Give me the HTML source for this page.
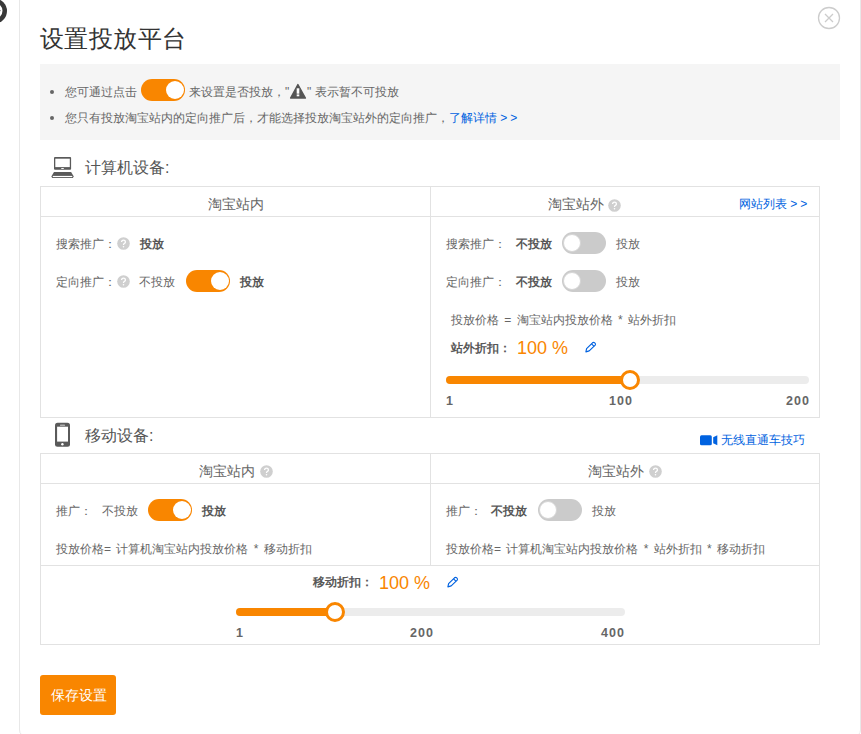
<!DOCTYPE html>
<html><head><meta charset="utf-8">
<style>
html,body{margin:0;padding:0;width:861px;height:734px;overflow:hidden;background:#fff;}
body{position:relative;font-family:"Liberation Sans",sans-serif;color:#666;}
.a{position:absolute;white-space:nowrap;}
.dlg{position:absolute;left:19px;top:-20px;width:840px;height:755px;border:1px solid #e8e8e8;border-radius:0 0 7px 7px;background:#fff;}
.title{font-size:24px;line-height:24px;color:#333;letter-spacing:0.4px;}
.info{left:40px;top:64px;width:800px;height:76px;background:#f5f5f5;}
.dot{width:4px;height:4px;border-radius:50%;background:#666;}
.t{font-size:12px;line-height:12px;color:#666;}
.h{font-size:14px;line-height:14px;color:#666;}
.tog{width:44px;height:22px;border-radius:11px;background:#f98600;box-sizing:border-box;}
.tog i{position:absolute;top:1.7px;right:0.9px;width:18.6px;height:18.6px;border-radius:50%;background:#fff;}
.tog.off{background:#cbcbcb;}
.tog.off i{left:0.7px;top:1.7px;right:auto;width:18.6px;height:18.6px;box-sizing:border-box;border:1px solid #d6d6d6;}
.tbl{border:1px solid #e2e2e2;box-sizing:border-box;}
.hl{height:1px;background:#e2e2e2;}
.vl{width:1px;background:#e2e2e2;}
.sec{font-size:16px;line-height:16px;color:#555;}
.blue{color:#0062e0;}
.bold{font-weight:bold;color:#585858;}
.org{color:#f98600;font-size:18px;line-height:18px;}
.q{width:13px;height:13px;}
.num{font-family:"Liberation Sans",sans-serif;font-size:12.5px;line-height:12px;font-weight:bold;color:#666;letter-spacing:1px;}
.track{height:8px;border-radius:4px;background:#ececec;}
.fill{height:8px;border-radius:4px 0 0 4px;background:#f98600;}
.knob{width:14px;height:14px;border:3.5px solid #f98600;border-radius:50%;background:#fff;}
.btn{left:40px;top:675px;width:76px;height:40px;border-radius:3px;background:#f98600;}
</style></head><body>
<div class="dlg"></div>
<svg class="a" style="left:0;top:0" width="20" height="30"><circle cx="-5.4" cy="11" r="12.4" fill="#383838"/><circle cx="-5.4" cy="10.8" r="7.9" fill="#fff"/><rect x="-2" y="10" width="2.6" height="1.2" fill="#777"/></svg>
<svg class="a" style="left:816px;top:5px" width="26" height="26"><circle cx="13" cy="13" r="10.5" fill="none" stroke="#ccc" stroke-width="1.3"/><path d="M9 9L17 17M17 9L9 17" stroke="#ccc" stroke-width="1.3"/></svg>

<div class="a title" id="title" style="left:40px;top:27px">设置投放平台</div>
<div class="a info"></div>
<div class="a dot" style="left:50px;top:90px"></div>
<div class="a t" id="b1" style="left:65px;top:86px">您可通过点击</div>
<div class="a tog" style="left:141px;top:79px"><i></i></div>
<div class="a t" id="b1b" style="left:189px;top:86px">来设置是否投放，"</div>
<svg class="a" style="left:288px;top:82px" width="20" height="18"><path d="M9.9 2.6L17.4 16.1H2.6Z" fill="#555" stroke="#555" stroke-width="1.4" stroke-linejoin="round"/><rect x="8.7" y="6.3" width="2.6" height="5.4" fill="#fff"/><rect x="8.7" y="12.4" width="2.6" height="1.9" fill="#fff"/></svg>
<div class="a t" id="b1c" style="left:307px;top:86px">" 表示暂不可投放</div>
<div class="a dot" style="left:50px;top:116px"></div>
<div class="a t" id="b2" style="left:65px;top:112px">您只有投放淘宝站内的定向推广后，才能选择投放淘宝站外的定向推广，<span class="blue">了解详情 <span style="letter-spacing:3px">&gt;</span>&gt;</span></div>

<!-- computer section -->
<svg class="a" style="left:46px;top:152px" width="34" height="30"><rect x="8" y="5.1" width="17.1" height="12.7" rx="1" fill="#5a5a5a"/><rect x="9.3" y="6.7" width="14.5" height="8.4" fill="#fff"/><ellipse cx="16.55" cy="16.5" rx="1.6" ry="0.6" fill="#fff"/><path d="M8 20H25.1L27.8 24.4L26.8 25.9H6.3L5.3 24.4Z" fill="#5a5a5a"/><rect x="6.8" y="23.9" width="19.5" height="1.2" fill="#fff"/></svg>
<div class="a sec" id="s1" style="left:85px;top:160px">计算机设备:</div>

<div class="a tbl" style="left:40px;top:186px;width:780px;height:232px"></div>
<div class="a hl" style="left:40px;top:216px;width:780px"></div>
<div class="a vl" style="left:430px;top:186px;height:232px"></div>

<div class="a h" id="h1" style="left:208px;top:197px">淘宝站内</div>
<div class="a h" id="h2" style="left:548px;top:197px">淘宝站外</div>
<svg class="a q" style="left:608px;top:199px" viewBox="0 0 13 13"><circle cx="6.5" cy="6.5" r="6.3" fill="#cfcfcf"/><path d="M4.6 5.1Q4.6 3.2 6.5 3.2Q8.4 3.2 8.4 4.9Q8.4 5.9 7.3 6.5Q6.5 7 6.5 7.9" fill="none" stroke="#fff" stroke-width="1.3"/><circle cx="6.5" cy="9.8" r="0.8" fill="#fff"/></svg>
<div class="a t blue" id="lnk1" style="left:739px;top:198px">网站列表 <span style="letter-spacing:3px">&gt;</span>&gt;</div>

<div class="a t" style="left:56px;top:238px">搜索推广：</div>
<svg class="a q" style="left:116.5px;top:237px" viewBox="0 0 13 13"><circle cx="6.5" cy="6.5" r="6.3" fill="#cfcfcf"/><path d="M4.6 5.1Q4.6 3.2 6.5 3.2Q8.4 3.2 8.4 4.9Q8.4 5.9 7.3 6.5Q6.5 7 6.5 7.9" fill="none" stroke="#fff" stroke-width="1.3"/><circle cx="6.5" cy="9.8" r="0.8" fill="#fff"/></svg>
<div class="a t bold" style="left:140px;top:238px">投放</div>
<div class="a t" style="left:56px;top:276px">定向推广：</div>
<svg class="a q" style="left:116.5px;top:275px" viewBox="0 0 13 13"><circle cx="6.5" cy="6.5" r="6.3" fill="#cfcfcf"/><path d="M4.6 5.1Q4.6 3.2 6.5 3.2Q8.4 3.2 8.4 4.9Q8.4 5.9 7.3 6.5Q6.5 7 6.5 7.9" fill="none" stroke="#fff" stroke-width="1.3"/><circle cx="6.5" cy="9.8" r="0.8" fill="#fff"/></svg>
<div class="a t" style="left:139px;top:276px">不投放</div>
<div class="a tog" style="left:186px;top:270px"><i></i></div>
<div class="a t bold" style="left:240px;top:276px">投放</div>

<div class="a t" style="left:446px;top:238px">搜索推广：</div>
<div class="a t bold" style="left:516px;top:238px">不投放</div>
<div class="a tog off" style="left:562px;top:232px"><i></i></div>
<div class="a t" style="left:616px;top:238px">投放</div>
<div class="a t" style="left:446px;top:276px">定向推广：</div>
<div class="a t bold" style="left:516px;top:276px">不投放</div>
<div class="a tog off" style="left:562px;top:270px"><i></i></div>
<div class="a t" style="left:616px;top:276px">投放</div>

<div class="a t" id="f1" style="left:451px;top:314px;word-spacing:2px">投放价格 = 淘宝站内投放价格 * 站外折扣</div>
<div class="a t bold" style="left:451px;top:342px">站外折扣：</div>
<div class="a org" id="p1" style="left:517px;top:339px">100 %</div>
<svg class="a" style="left:578px;top:336px" width="24" height="22"><path d="M7.9 15.9L8.6 12.7L14.5 6.8Q15.6 5.9 16.8 6.9Q18 8.1 17.2 9.1L11.2 14.9Z" fill="none" stroke="#0062e0" stroke-width="1.15" stroke-linejoin="round"/><path d="M13.5 7.8L15.9 10.2" stroke="#0062e0" stroke-width="1.2"/></svg>

<div class="a track" style="left:446px;top:376px;width:363px"></div>
<div class="a fill" style="left:446px;top:376px;width:184px"></div>
<div class="a knob" style="left:620px;top:369.5px"></div>
<div class="a num" id="n1" style="left:446px;top:395px">1</div>
<div class="a num" id="n2" style="left:609px;top:395px">100</div>
<div class="a num" id="n3" style="left:786px;top:395px">200</div>

<!-- mobile section -->
<svg class="a" style="left:52px;top:420px" width="22" height="30"><rect x="3" y="2.8" width="15" height="24" rx="2.5" fill="#5a5a5a"/><rect x="5.1" y="6.7" width="10.9" height="14.9" fill="#fff"/><rect x="8" y="4.7" width="5" height="0.9" rx="0.4" fill="#fff"/><circle cx="10.4" cy="24.3" r="1.2" fill="#fff"/></svg>
<div class="a sec" id="s2" style="left:85px;top:428px">移动设备:</div>
<svg class="a" style="left:699px;top:434px" width="20" height="13"><rect x="1" y="1.2" width="11.8" height="10.1" rx="1.5" fill="#0062e0"/><path d="M14.2 3.3L18.3 1.2V11.3L14.2 9.2Z" fill="#0062e0"/></svg>
<div class="a t blue" id="lnk2" style="left:721px;top:434px">无线直通车技巧</div>

<div class="a tbl" style="left:40px;top:453px;width:780px;height:192px"></div>
<div class="a hl" style="left:40px;top:483px;width:780px"></div>
<div class="a hl" style="left:40px;top:565px;width:780px"></div>
<div class="a vl" style="left:430px;top:453px;height:112px"></div>

<div class="a h" id="h3" style="left:199px;top:464px">淘宝站内</div>
<svg class="a q" style="left:259.5px;top:465px" viewBox="0 0 13 13"><circle cx="6.5" cy="6.5" r="6.3" fill="#cfcfcf"/><path d="M4.6 5.1Q4.6 3.2 6.5 3.2Q8.4 3.2 8.4 4.9Q8.4 5.9 7.3 6.5Q6.5 7 6.5 7.9" fill="none" stroke="#fff" stroke-width="1.3"/><circle cx="6.5" cy="9.8" r="0.8" fill="#fff"/></svg>
<div class="a h" id="h4" style="left:588px;top:464px">淘宝站外</div>
<svg class="a q" style="left:648.5px;top:465px" viewBox="0 0 13 13"><circle cx="6.5" cy="6.5" r="6.3" fill="#cfcfcf"/><path d="M4.6 5.1Q4.6 3.2 6.5 3.2Q8.4 3.2 8.4 4.9Q8.4 5.9 7.3 6.5Q6.5 7 6.5 7.9" fill="none" stroke="#fff" stroke-width="1.3"/><circle cx="6.5" cy="9.8" r="0.8" fill="#fff"/></svg>

<div class="a t" style="left:56px;top:505px">推广：</div>
<div class="a t" style="left:102px;top:505px">不投放</div>
<div class="a tog" style="left:148px;top:499px"><i></i></div>
<div class="a t bold" style="left:202px;top:505px">投放</div>
<div class="a t" id="f2" style="left:56px;top:543px;word-spacing:2px">投放价格= 计算机淘宝站内投放价格 * 移动折扣</div>

<div class="a t" style="left:446px;top:505px">推广：</div>
<div class="a t bold" style="left:491px;top:505px">不投放</div>
<div class="a tog off" style="left:538px;top:499px"><i></i></div>
<div class="a t" style="left:592px;top:505px">投放</div>
<div class="a t" id="f3" style="left:446px;top:543px;word-spacing:2px">投放价格= 计算机淘宝站内投放价格 * 站外折扣 * 移动折扣</div>

<div class="a t bold" style="left:313px;top:576px">移动折扣：</div>
<div class="a org" id="p2" style="left:379px;top:574px">100 %</div>
<svg class="a" style="left:440px;top:571px" width="24" height="22"><path d="M7.9 15.9L8.6 12.7L14.5 6.8Q15.6 5.9 16.8 6.9Q18 8.1 17.2 9.1L11.2 14.9Z" fill="none" stroke="#0062e0" stroke-width="1.15" stroke-linejoin="round"/><path d="M13.5 7.8L15.9 10.2" stroke="#0062e0" stroke-width="1.2"/></svg>

<div class="a track" style="left:236px;top:608px;width:389px"></div>
<div class="a fill" style="left:236px;top:608px;width:99px"></div>
<div class="a knob" style="left:324.8px;top:602px"></div>
<div class="a num" id="n4" style="left:236px;top:627px">1</div>
<div class="a num" id="n5" style="left:410px;top:627px">200</div>
<div class="a num" id="n6" style="left:601px;top:627px">400</div>

<div class="a btn"></div>
<div class="a" id="btnt" style="left:51px;top:688px;font-size:14px;line-height:14px;color:#fff">保存设置</div>
</body></html>
